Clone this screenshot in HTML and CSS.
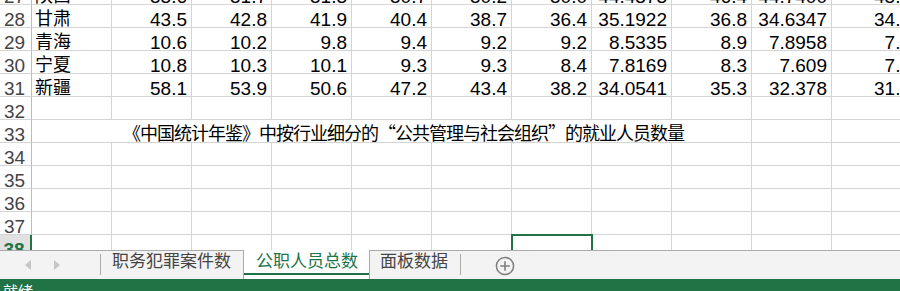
FILE: index.html
```html
<!DOCTYPE html>
<html lang="zh-CN">
<head>
  <meta charset="UTF-8">
  <meta name="viewport" content="width=device-width, initial-scale=1.0">
  <title>公职人员总数</title>
  <link rel="stylesheet" href="styles.css">
</head>
<body>
  <div class="sheet">
    <div class="rows" id="rows"></div>
  </div>

  <div class="tabbar">
    <div class="nav">
      <span class="arrow-left"></span>
      <span class="arrow-right"></span>
    </div>
    <span class="sep"></span>
    <div class="tab">职务犯罪案件数</div>
    <div class="tab active">公职人员总数</div>
    <div class="tab">面板数据</div>
    <span class="sep"></span>
    <svg class="add-btn" width="20" height="20" viewBox="0 0 20 20">
      <circle cx="10" cy="10" r="8.6" fill="none" stroke="#7f7f7f" stroke-width="1.5"/>
      <path d="M10 5.2v9.6M5.2 10h9.6" stroke="#7f7f7f" stroke-width="1.6"/>
    </svg>
  </div>

  <div class="status">就绪</div>

  <script>
    const data = [
      { no: 27, name: '陕西', vals: ['53.6', '51.7', '51.3', '50.7', '50.2', '50.0', '44.4373', '46.4', '44.7400', '45.5'] },
      { no: 28, name: '甘肃', vals: ['43.5', '42.8', '41.9', '40.4', '38.7', '36.4', '35.1922', '36.8', '34.6347', '34.5'] },
      { no: 29, name: '青海', vals: ['10.6', '10.2', '9.8', '9.4', '9.2', '9.2', '8.5335', '8.9', '7.8958', '7.7'] },
      { no: 30, name: '宁夏', vals: ['10.8', '10.3', '10.1', '9.3', '9.3', '8.4', '7.8169', '8.3', '7.609', '7.6'] },
      { no: 31, name: '新疆', vals: ['58.1', '53.9', '50.6', '47.2', '43.4', '38.2', '34.0541', '35.3', '32.378', '31.9'] }
    ];
    const note = '《中国统计年鉴》中按行业细分的“公共管理与社会组织”的就业人员数量';

    function cell(text, cls) {
      return `<div class="cell ${cls || ''}">${text}</div>`;
    }

    function renderRows() {
      const box = document.getElementById('rows');
      let html = '';

      data.forEach(r => {
        html += `<div class="row"><div class="hd">${r.no}</div>`;
        html += cell(r.name, 'txt');
        r.vals.forEach(v => { html += cell(v); });
        html += '</div>';
      });

      for (let no = 32; no <= 38; no++) {
        const sel = no === 38;
        html += `<div class="row"><div class="hd ${sel ? 'hd-sel' : ''}">${no}</div>`;
        if (no === 33) {
          html += `<div class="cell txt note">${note}</div>` + cell('') + cell('');
        } else {
          for (let c = 0; c < 11; c++) {
            html += cell('', sel && c === 6 ? 'picked' : '');
          }
        }
        html += '</div>';
      }
      box.innerHTML = html;
    }

    renderRows();
  </script>
</body>
</html>
```

FILE: styles.css
```css
body {
  margin: 0;
  height: 291px;
  overflow: hidden;
  background: #fff;
  font-family: 'Liberation Sans Narrow', 'Liberation Sans', 'Noto Sans CJK SC', sans-serif;
  color: #000;
}
.sheet {
  height: 250px;
  overflow: hidden;
}
.rows {
  margin-top: -18px;
}
.row {
  display: grid;
  grid-template-columns: 32px repeat(10, 80px) 84px;
  height: 23px;
}
.hd {
  display: flex;
  align-items: flex-end;
  justify-content: center;
  padding-right: 2px;
  border-right: 1px solid #bcbcbc;
  border-bottom: 1px solid #d4d4d4;
  color: #444;
  font-size: 19px;
  line-height: 15px;
}
.hd-sel {
  background: #e1e1e1;
  color: #217346;
  font-weight: bold;
  border-right: 2px solid #217346;
}
.cell {
  display: flex;
  align-items: flex-end;
  justify-content: flex-end;
  padding: 0 4px 0 3px;
  border-right: 1px solid #d4d4d4;
  border-bottom: 1px solid #d4d4d4;
  font-size: 19px;
  line-height: 15px;
  white-space: nowrap;
  overflow: hidden;
}
.cell.txt {
  justify-content: flex-start;
  font-family: 'Noto Sans CJK SC', sans-serif;
  font-size: 18px;
  line-height: 18px;
  padding-bottom: 1px;
}
.note {
  grid-column: span 9;
  padding-left: 91px;
  letter-spacing: -1px;
}
.picked {
  position: relative;
  outline: 2px solid #217346;
  outline-offset: -1px;
}
.tabbar {
  display: flex;
  height: 28px;
  border-top: 1px solid #ababab;
  background: #f3f3f3;
  font-family: 'Noto Sans CJK SC', sans-serif;
  font-size: 17px;
  color: #444;
}
.nav {
  display: flex;
  align-items: center;
  gap: 23px;
  width: 100px;
  padding-left: 25px;
  box-sizing: border-box;
}
.arrow-left, .arrow-right {
  width: 0;
  height: 0;
  border-top: 5px solid transparent;
  border-bottom: 5px solid transparent;
}
.arrow-left {
  border-right: 6px solid #c6c6c6;
}
.arrow-right {
  border-left: 6px solid #c6c6c6;
}
.sep {
  width: 1px;
  height: 21px;
  margin-top: 3px;
  background: #ababab;
}
.tab {
  padding: 0 12px 0 11px;
  line-height: 17px;
  white-space: nowrap;
}
.tab.active {
  margin-top: -1px;
  height: 29px;
  padding: 1px 11px 0 12px;
  box-sizing: border-box;
  border-left: 1px solid #ababab;
  border-right: 1px solid #ababab;
  background: linear-gradient(#217346, #217346) 0 23px / 100% 2px no-repeat, #fff;
  color: #217346;
}
.tab.active + .tab {
  padding-left: 10px;
}
.add-btn {
  margin: 5px 0 0 34px;
}
.status {
  height: 22px;
  padding: 4px 3px 0;
  background: #217346;
  color: #fff;
  font-family: 'Noto Sans CJK SC', sans-serif;
  font-size: 15px;
  line-height: 15px;
}
```
